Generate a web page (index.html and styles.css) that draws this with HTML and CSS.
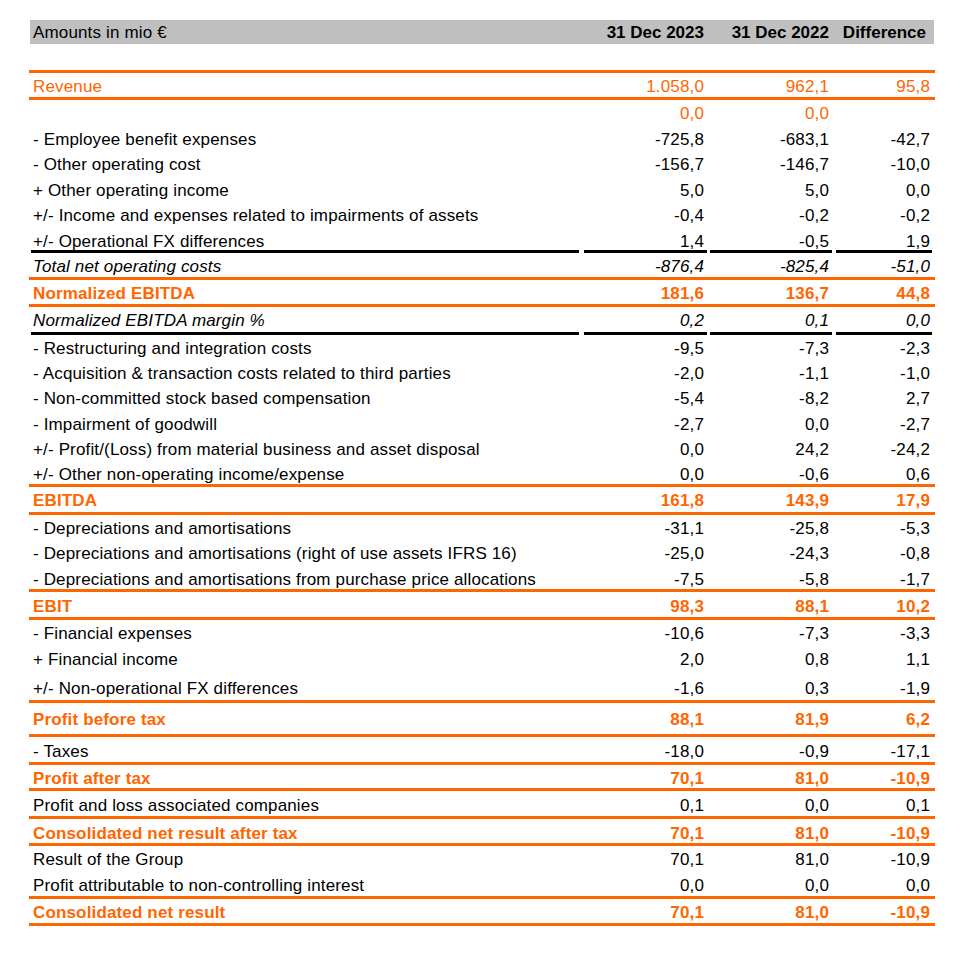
FILE: index.html
```html
<!DOCTYPE html>
<html lang="en">
<head>
<meta charset="utf-8">
<title>Income statement</title>
<link rel="stylesheet" href="styles.css">
</head>
<body>
<div class="sheet">
  <div class="row head">
    <span class="lbl">Amounts in mio €</span>
    <span class="num b">31 Dec 2023</span>
    <span class="num b">31 Dec 2022</span>
    <span class="num b diff">Difference</span>
  </div>
  <div class="spacer"></div>

  <div class="oline"></div>
  <div class="row h24 orange"><span class="lbl">Revenue</span><span class="num">1.058,0</span><span class="num">962,1</span><span class="num">95,8</span></div>
  <div class="oline"></div>
  <div class="row h255 orange"><span class="lbl"></span><span class="num">0,0</span><span class="num">0,0</span><span class="num"></span></div>
  <div class="row h255"><span class="lbl">- Employee benefit expenses</span><span class="num">-725,8</span><span class="num">-683,1</span><span class="num">-42,7</span></div>
  <div class="row h255"><span class="lbl">- Other operating cost</span><span class="num">-156,7</span><span class="num">-146,7</span><span class="num">-10,0</span></div>
  <div class="row h255"><span class="lbl">+ Other operating income</span><span class="num">5,0</span><span class="num">5,0</span><span class="num">0,0</span></div>
  <div class="row h255"><span class="lbl">+/- Income and expenses related to impairments of assets</span><span class="num">-0,4</span><span class="num">-0,2</span><span class="num">-0,2</span></div>
  <div class="row h225"><span class="lbl">+/- Operational FX differences</span><span class="num">1,4</span><span class="num">-0,5</span><span class="num">1,9</span></div>
  <div class="rule"><span></span><span></span><span></span><span></span></div>
  <div class="row h24 it"><span class="lbl">Total net operating costs</span><span class="num">-876,4</span><span class="num">-825,4</span><span class="num">-51,0</span></div>
  <div class="oline"></div>
  <div class="row h24 orange b"><span class="lbl">Normalized EBITDA</span><span class="num">181,6</span><span class="num">136,7</span><span class="num">44,8</span></div>
  <div class="oline"></div>
  <div class="row h25 it"><span class="lbl">Normalized EBITDA margin %</span><span class="num">0,2</span><span class="num">0,1</span><span class="num">0,0</span></div>
  <div class="rule"><span></span><span></span><span></span><span></span></div>
  <div class="row h252"><span class="lbl">- Restructuring and integration costs</span><span class="num">-9,5</span><span class="num">-7,3</span><span class="num">-2,3</span></div>
  <div class="row h252"><span class="lbl">- Acquisition &amp; transaction costs related to third parties</span><span class="num">-2,0</span><span class="num">-1,1</span><span class="num">-1,0</span></div>
  <div class="row h252"><span class="lbl">- Non-committed stock based compensation</span><span class="num">-5,4</span><span class="num">-8,2</span><span class="num">2,7</span></div>
  <div class="row h252"><span class="lbl">- Impairment of goodwill</span><span class="num">-2,7</span><span class="num">0,0</span><span class="num">-2,7</span></div>
  <div class="row h252"><span class="lbl">+/- Profit/(Loss) from material business and asset disposal</span><span class="num">0,0</span><span class="num">24,2</span><span class="num">-24,2</span></div>
  <div class="row h23"><span class="lbl">+/- Other non-operating income/expense</span><span class="num">0,0</span><span class="num">-0,6</span><span class="num">0,6</span></div>
  <div class="oline"></div>
  <div class="row h25 orange b"><span class="lbl">EBITDA</span><span class="num">161,8</span><span class="num">143,9</span><span class="num">17,9</span></div>
  <div class="oline"></div>
  <div class="row h255"><span class="lbl">- Depreciations and amortisations</span><span class="num">-31,1</span><span class="num">-25,8</span><span class="num">-5,3</span></div>
  <div class="row h255"><span class="lbl">- Depreciations and amortisations (right of use assets IFRS 16)</span><span class="num">-25,0</span><span class="num">-24,3</span><span class="num">-0,8</span></div>
  <div class="row h23"><span class="lbl">- Depreciations and amortisations from purchase price allocations</span><span class="num">-7,5</span><span class="num">-5,8</span><span class="num">-1,7</span></div>
  <div class="oline"></div>
  <div class="row h25 pt5 orange b"><span class="lbl">EBIT</span><span class="num">98,3</span><span class="num">88,1</span><span class="num">10,2</span></div>
  <div class="oline"></div>
  <div class="row h265"><span class="lbl">- Financial expenses</span><span class="num">-10,6</span><span class="num">-7,3</span><span class="num">-3,3</span></div>
  <div class="row h285"><span class="lbl">+ Financial income</span><span class="num">2,0</span><span class="num">0,8</span><span class="num">1,1</span></div>
  <div class="row h25"><span class="lbl">+/- Non-operational FX differences</span><span class="num">-1,6</span><span class="num">0,3</span><span class="num">-1,9</span></div>
  <div class="oline"></div>
  <div class="row h31 pt7 orange b"><span class="lbl">Profit before tax</span><span class="num">88,1</span><span class="num">81,9</span><span class="num">6,2</span></div>
  <div class="oline"></div>
  <div class="row h25 pt5"><span class="lbl">- Taxes</span><span class="num">-18,0</span><span class="num">-0,9</span><span class="num">-17,1</span></div>
  <div class="oline"></div>
  <div class="row h23 orange b"><span class="lbl">Profit after tax</span><span class="num">70,1</span><span class="num">81,0</span><span class="num">-10,9</span></div>
  <div class="oline"></div>
  <div class="row h25 pt5"><span class="lbl">Profit and loss associated companies</span><span class="num">0,1</span><span class="num">0,0</span><span class="num">0,1</span></div>
  <div class="oline"></div>
  <div class="row h24 pt5 orange b"><span class="lbl">Consolidated net result after tax</span><span class="num">70,1</span><span class="num">81,0</span><span class="num">-10,9</span></div>
  <div class="oline"></div>
  <div class="row h265"><span class="lbl">Result of the Group</span><span class="num">70,1</span><span class="num">81,0</span><span class="num">-10,9</span></div>
  <div class="row h235"><span class="lbl">Profit attributable to non-controlling interest</span><span class="num">0,0</span><span class="num">0,0</span><span class="num">0,0</span></div>
  <div class="oline"></div>
  <div class="row h24 orange b"><span class="lbl">Consolidated net result</span><span class="num">70,1</span><span class="num">81,0</span><span class="num">-10,9</span></div>
  <div class="oline"></div>
</div>
</body>
</html>
```

FILE: styles.css
```css
html, body {
  margin: 0;
  padding: 0;
  background: #ffffff;
}

body {
  font-family: "Liberation Sans", Arial, sans-serif;
  font-size: 17px;
  letter-spacing: 0.15px;
  color: #000000;
}

.sheet {
  width: 906px;
  margin: 20px 0 0 29px;
  display: flex;
  flex-direction: column;
}

.row,
.rule {
  display: grid;
  grid-template-columns: 552px 128px 125px 101px;
}

.row {
  box-sizing: border-box;
  padding-top: 4px;
  line-height: 19px;
  white-space: nowrap;
  overflow: hidden;
}

.lbl {
  padding-left: 4px;
}

.num {
  text-align: right;
  padding-right: 5px;
}

.head {
  height: 24px;
  padding-top: 2px;
  line-height: 22px;
  background: #bfbfbf;
  margin: 0 1px;
  grid-template-columns: 551px 128px 125px 100px;
}

.head .lbl {
  padding-left: 3px;
}

.head .b {
  letter-spacing: 0;
}

.head .diff {
  padding-right: 8px;
}

.spacer {
  height: 26px;
}

.oline {
  height: 3px;
  background: #ff6600;
}

.rule {
  height: 3px;
}

.rule span {
  background: #000000;
}

.rule span:nth-child(1) { margin: 0 2px; }
.rule span:nth-child(2) { margin: 0 2px 0 3px; }
.rule span:nth-child(3) { margin: 0 2px 0 1px; }
.rule span:nth-child(4) { margin: 0 3px 0 2px; }

.orange { color: #ff6600; }
.b { font-weight: bold; }
.it { font-style: italic; }

.pt5 { padding-top: 5px; }
.pt7 { padding-top: 7px; }

.h225 { height: 22.5px; }
.h23 { height: 23px; }
.h235 { height: 23.5px; }
.h24 { height: 24px; }
.h25 { height: 25px; }
.h252 { height: 25.2px; }
.h255 { height: 25.5px; }
.h265 { height: 26.5px; }
.h285 { height: 28.5px; }
.h31 { height: 31px; }
```
